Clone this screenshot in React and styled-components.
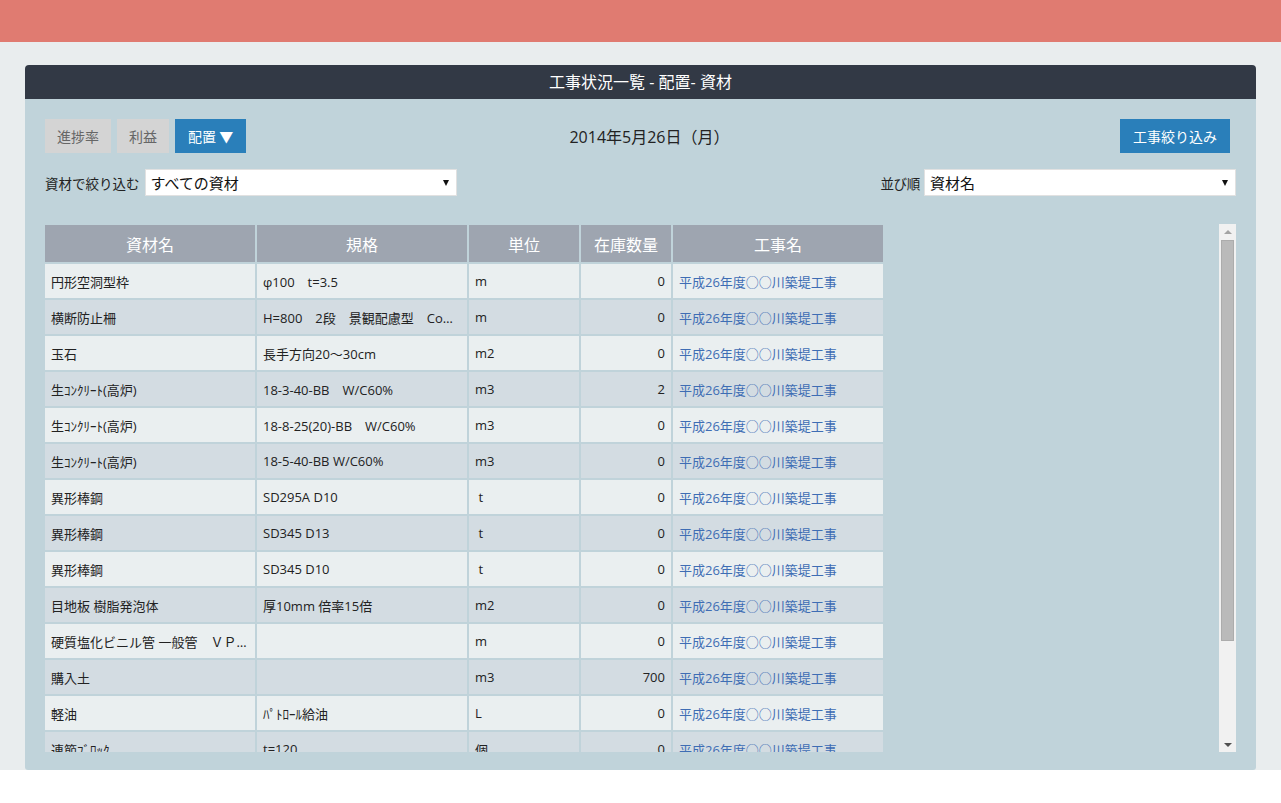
import React from "react";
import styled, { createGlobalStyle } from "styled-components";

const GlobalStyle = createGlobalStyle`
  html, body { margin: 0; padding: 0; background: #ffffff; }
  body {
    font-family: "Open Sans", "Noto Sans CJK JP", sans-serif;
    color: #222;
  }
  * { box-sizing: border-box; }
`;

const TopBar = styled.div`
  height: 42px;
  background: #e07b71;
`;

const Page = styled.div`
  background: #e9edee;
  padding: 23px 25px 0 25px;
`;

const Panel = styled.section`
  border-radius: 4px 4px 3px 3px;
  overflow: hidden;
`;

const PanelHeader = styled.h1`
  margin: 0;
  height: 34px;
  line-height: 34px;
  background: #323945;
  color: #ffffff;
  font-size: 16px;
  font-weight: normal;
  text-align: center;
`;

const PanelBody = styled.div`
  background: #c0d3da;
  padding: 20px 20px 18px 20px;
`;

const Toolbar = styled.div`
  display: grid;
  grid-template-columns: 1fr auto 1fr;
  align-items: center;
  height: 34px;
`;

const ButtonGroup = styled.div`
  display: flex;
  gap: 6px;
  justify-content: ${(p) => (p.$end ? "flex-end" : "flex-start")};
  padding-right: ${(p) => (p.$end ? "6px" : "0")};
`;

const Button = styled.button`
  height: 34px;
  padding: 0 ${(p) => p.$pad || 12}px;
  border: none;
  border-radius: 0;
  font-family: "Noto Sans CJK JP", sans-serif;
  font-size: 14px;
  cursor: pointer;
  background: ${(p) => (p.$primary ? "#2a7fba" : "#d4d4d4")};
  color: ${(p) => (p.$primary ? "#ffffff" : "#666666")};
`;

const DateText = styled.div`
  font-size: 16px;
  color: #222;
  padding-left: 18px;
`;

const FilterRow = styled.div`
  margin-top: 16px;
  display: flex;
  justify-content: space-between;
  align-items: center;
  height: 27px;
`;

const Field = styled.div`
  display: flex;
  align-items: center;
  gap: ${(p) => p.$gap || 5}px;
`;

const Label = styled.span`
  font-size: 13.5px;
  color: #222;
  letter-spacing: ${(p) => p.$ls || 0}px;
`;

const SelectBox = styled.div`
  width: 312px;
  height: 27px;
  background: #ffffff;
  border: 1px solid #e1e1e1;
  display: flex;
  align-items: center;
  justify-content: space-between;
  padding: 0 7px 0 5px;
  font-size: 15px;
  color: #111;
`;

const Caret = styled.span`
  width: 0;
  height: 0;
  border-left: 3px solid transparent;
  border-right: 3px solid transparent;
  border-top: 6px solid #111;
`;

const ScrollFrame = styled.div`
  margin-top: 28px;
  margin-left: -2px;
  height: 528px;
  display: flex;
`;

const Viewport = styled.div`
  flex: 1;
  overflow-y: auto;
  overflow-x: hidden;
  scrollbar-width: none;
  &::-webkit-scrollbar { display: none; }
`;

const ScrollBar = styled.div`
  width: 17px;
  background: #f1f1f1;
  display: flex;
  flex-direction: column;
`;

const ArrowButton = styled.div`
  height: 16px;
  display: flex;
  align-items: center;
  justify-content: center;
  &::before {
    content: "";
    width: 0;
    height: 0;
    border-left: 4px solid transparent;
    border-right: 4px solid transparent;
    ${(p) =>
      p.$down
        ? "border-top: 4px solid #505050; margin-top: 1px;"
        : "border-bottom: 4px solid #a3a3a3; margin-bottom: 1px;"}
  }
`;

const Track = styled.div`
  flex: 1;
  padding: 0 2px;
`;

const Thumb = styled.div`
  height: 401px;
  background: #bababa;
  border: 1px solid #acacac;
`;

const Table = styled.table`
  width: 842px;
  margin-top: -1px;
  border-spacing: 2px;
  table-layout: fixed;
`;

const Th = styled.th`
  width: ${(p) => p.$w}px;
  height: 37px;
  background: #9ea5b0;
  color: #ffffff;
  font-family: "Noto Sans CJK JP", sans-serif;
  font-size: 16px;
  font-weight: normal;
  text-align: center;
  padding: 0;
`;

const Tr = styled.tr`
  background: ${(p) => (p.$alt ? "#d3dce2" : "#eaeff0")};
`;

const Td = styled.td`
  height: 34px;
  padding: 0 6px;
  font-size: 13px;
  white-space: nowrap;
  overflow: hidden;
  text-overflow: ellipsis;
  text-align: ${(p) => (p.$right ? "right" : "left")};
  color: ${(p) => (p.$link ? "#3e6db4" : "#222222")};
`;

const columns = [
  { key: "name", label: "資材名", w: 210 },
  { key: "spec", label: "規格", w: 210 },
  { key: "unit", label: "単位", w: 110 },
  { key: "qty", label: "在庫数量", w: 90 },
  { key: "project", label: "工事名", w: 210 },
];

const P = "平成26年度○○川築堤工事";

const rows = [
  ["円形空洞型枠", "φ100　t=3.5", "m", "0"],
  ["横断防止柵", "H=800　2段　景観配慮型　Co塗装仕上", "m", "0"],
  ["玉石", "長手方向20～30cm", "m2", "0"],
  ["生ｺﾝｸﾘｰﾄ(高炉)", "18-3-40-BB　W/C60%", "m3", "2"],
  ["生ｺﾝｸﾘｰﾄ(高炉)", "18-8-25(20)-BB　W/C60%", "m3", "0"],
  ["生ｺﾝｸﾘｰﾄ(高炉)", "18-5-40-BB W/C60%", "m3", "0"],
  ["異形棒鋼", "SD295A D10", "\u00a0t", "0"],
  ["異形棒鋼", "SD345 D13", "\u00a0t", "0"],
  ["異形棒鋼", "SD345 D10", "\u00a0t", "0"],
  ["目地板 樹脂発泡体", "厚10mm 倍率15倍", "m2", "0"],
  ["硬質塩化ビニル管 一般管　ＶＰ管　φ100", "", "m", "0"],
  ["購入土", "", "m3", "700"],
  ["軽油", "ﾊﾟﾄﾛｰﾙ給油", "L", "0"],
  ["連節ﾌﾞﾛｯｸ", "t=120", "個", "0"],
  ["吸出し防止材", "t=10mm", "m2", "0"],
  ["再生砕石", "RC-40", "m3", "0"],
  ["張芝", "野芝", "m2", "0"],
];

export default function App() {
  return (
    <>
      <GlobalStyle />
      <TopBar />
      <Page>
        <Panel>
          <PanelHeader>工事状況一覧 - 配置- 資材</PanelHeader>
          <PanelBody>
            <Toolbar>
              <ButtonGroup>
                <Button $pad={12}>進捗率</Button>
                <Button $pad={12}>利益</Button>
                <Button $primary $pad={13}>配置 ▼</Button>
              </ButtonGroup>
              <DateText>2014年5月26日（月）</DateText>
              <ButtonGroup $end>
                <Button $primary $pad={13}>工事絞り込み</Button>
              </ButtonGroup>
            </Toolbar>
            <FilterRow>
              <Field>
                <Label>資材で絞り込む</Label>
                <SelectBox>
                  <span>すべての資材</span>
                  <Caret />
                </SelectBox>
              </Field>
              <Field $gap={4}>
                <Label $ls={-0.3}>並び順</Label>
                <SelectBox>
                  <span>資材名</span>
                  <Caret />
                </SelectBox>
              </Field>
            </FilterRow>
            <ScrollFrame>
              <Viewport>
                <Table>
                  <thead>
                    <tr>
                      {columns.map((c) => (
                        <Th key={c.key} $w={c.w}>
                          {c.label}
                        </Th>
                      ))}
                    </tr>
                  </thead>
                  <tbody>
                    {rows.map((r, i) => (
                      <Tr key={i} $alt={i % 2 === 1}>
                        <Td>{r[0]}</Td>
                        <Td>{r[1]}</Td>
                        <Td>{r[2]}</Td>
                        <Td $right>{r[3]}</Td>
                        <Td $link>{P}</Td>
                      </Tr>
                    ))}
                  </tbody>
                </Table>
              </Viewport>
              <ScrollBar aria-hidden="true">
                <ArrowButton />
                <Track>
                  <Thumb />
                </Track>
                <ArrowButton $down />
              </ScrollBar>
            </ScrollFrame>
          </PanelBody>
        </Panel>
      </Page>
    </>
  );
}
